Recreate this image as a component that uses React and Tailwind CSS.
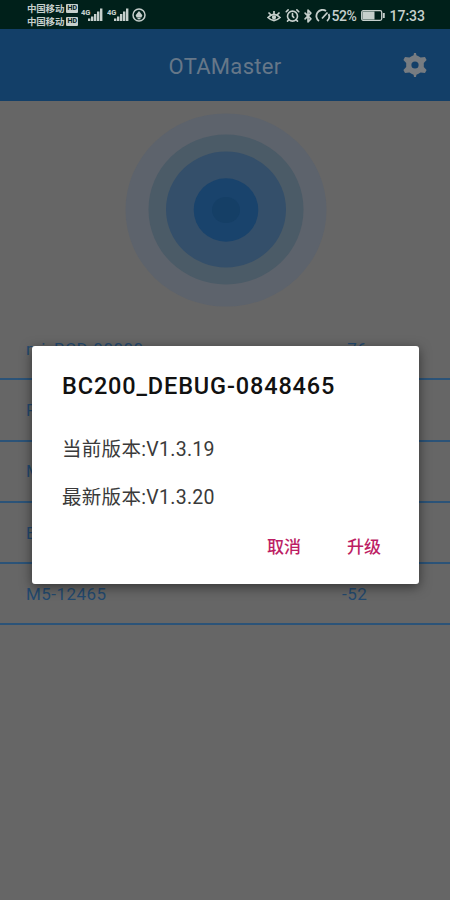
import { Bluetooth, AlarmClock } from "lucide-react";

const devices = [
    { name: "mi_BCD-00000", rssi: "-76" },
    { name: "P", rssi: "" },
    { name: "M", rssi: "" },
    { name: "B", rssi: "" },
    { name: "M5-12465", rssi: "-52" },
];

function Signal({ label }) {
    return (
        <svg viewBox="0 0 22 16" className="w-[22px] h-4 shrink-0" fill="#c6cfcc">
            <text x="0" y="8" fontSize="7.5" fontWeight="800" fontFamily="Roboto">{label}</text>
            <rect x="7" y="11.5" width="2.4" height="2.5" />
            <rect x="10" y="9.5" width="2.4" height="4.5" />
            <rect x="13" y="7" width="2.4" height="7" />
            <rect x="16" y="4.5" width="2.4" height="9.5" />
            <rect x="19" y="1.5" width="2.4" height="12.5" />
        </svg>
    );
}

function Carrier() {
    return (
        <div className="flex items-center gap-[2px] h-[13px]">
            <span className="text-[9.5px] leading-[13px] font-bold tracking-[-0.2px]">中国移动</span>
            <span className="w-3 h-[9px] rounded-[1px] bg-[#c6cfcc] text-[#00201a] text-[7px] leading-[9px] font-bold text-center">HD</span>
        </div>
    );
}

function StatusBar() {
    return (
        <div className="flex items-center h-[29px] pl-[27px] bg-[#00201a] text-[#c6cfcc]">
            <div className="w-[54px] shrink-0 pt-px">
                <Carrier />
                <Carrier />
            </div>
            <Signal label="4G" />
            <div className="w-[4px]" />
            <Signal label="4G" />
            <svg viewBox="0 0 14 14" className="ml-[3px] mt-px w-[14px] h-[14px]" fill="none" stroke="currentColor" strokeWidth="1.5">
                <circle cx="7" cy="7" r="6" />
                <path d="M3.6 7.2 7 3l3.4 4.2-1 2.3H4.6z" fill="currentColor" stroke="none" />
                <path d="M5.5 10.6h3" />
            </svg>
            <div className="flex items-center ml-auto pt-[2px] pr-[25px]">
                <svg viewBox="0 0 14 14" className="w-[14px] h-[14px]" fill="none" stroke="currentColor" strokeWidth="1.7">
                    <path d="M1 8.5q6-6 12 0q-6 6-12 0zM1.5 3.5l2 2M7 2v3M12.5 3.5l-2 2" />
                    <circle cx="7" cy="8.3" r="1.3" fill="currentColor" />
                </svg>
                <AlarmClock size={15} strokeWidth={2.6} className="ml-1" />
                <Bluetooth size={14} strokeWidth={2.8} className="ml-px" />
                <svg viewBox="0 0 16 14" className="w-4 h-[14px]" fill="none" stroke="currentColor" strokeWidth="1.8">
                    <path d="M4 12A5.7 5.7 0 0 1 11 2M13.6 5A5.7 5.7 0 0 1 12 12M7 9.5l5.5-6" />
                </svg>
                <span className="w-[27px] text-[14px] leading-none font-medium tracking-[-0.5px]">52%</span>
                <svg viewBox="0 0 24 11" className="ml-[3px] w-6 h-[11px]" fill="none" stroke="currentColor">
                    <rect x="0.7" y="0.7" width="20" height="9.6" rx="1.5" strokeWidth="1.3" />
                    <rect x="1.5" y="1.5" width="12" height="8" fill="currentColor" stroke="none" />
                    <path d="M22.8 3v5" strokeWidth="1.9" />
                </svg>
                <span className="ml-[4px] text-[14px] leading-none font-medium">17:33</span>
            </div>
        </div>
    );
}

function Header() {
    return (
        <header className="flex items-center justify-between h-[72px] bg-[#133f68]">
            <div className="w-[60px]" />
            <h1 className="pt-[3px] text-[22px] leading-none tracking-[0.3px] text-[#667788]">OTAMaster</h1>
            <div className="w-[60px] pl-[13px]">
                <svg viewBox="0 0 24 26" className="w-6 h-[26px]" fill="#777c81" fillRule="evenodd">
                    <path d="M8.5 4.2 10.6 3.2 11 1h2L13.4 3.2 15.5 4.2 17.6 5.6 22 4.9 23.6 8 20.8 11V15L23.6 18 22 21.1 17.6 20.4 15.5 21.8 13.4 22.8 13 25h-2L10.6 22.8 8.5 21.8 6.4 20.4 2 21.1 0.4 18 3.2 15V11L0.4 8 2 4.9 6.4 5.6zM12 9.4a3.6 3.6 0 1 0 0 7.2a3.6 3.6 0 1 0 0-7.2z" />
                </svg>
            </div>
        </header>
    );
}

function Radar() {
    return (
        <div className="flex justify-center pt-3 pl-px h-[218px]">
            <svg viewBox="0 0 202 194" className="w-[202px] h-[194px]">
                <ellipse cx="101" cy="97" rx="100.5" ry="96.5" fill="#5d636c" />
                <ellipse cx="101" cy="96.5" rx="77.5" ry="75" fill="#4b5b67" />
                <ellipse cx="101" cy="96.5" rx="60" ry="58" fill="#344f6a" />
                <ellipse cx="101" cy="97" rx="32.3" ry="31.7" fill="#19436c" />
                <ellipse cx="101" cy="97" rx="14" ry="13" fill="#153f66" />
            </svg>
        </div>
    );
}

function UpgradeDialog() {
    return (
        <div role="dialog" className="absolute left-8 top-[346px] flex flex-col w-[387px] h-[238px] px-[30px] rounded-[3px] bg-white shadow-[0_3px_12px_rgba(0,0,0,0.5)]">
            <h2 className="mt-[27px] text-[23.5px] leading-[26px] font-medium tracking-[0.85px] text-[#111]">BC200_DEBUG-0848465</h2>
            <p className="mt-[39px] text-[19.5px] leading-6 tracking-[0.3px] text-[#3a3a3a]">当前版本:V1.3.19</p>
            <p className="mt-6 text-[19.5px] leading-6 tracking-[0.3px] text-[#3a3a3a]">最新版本:V1.3.20</p>
            <div className="flex justify-end gap-[46px] mt-[25px] pr-2 text-[17px] leading-6 font-medium text-[#bd1e64]">
                <button>取消</button>
                <button>升级</button>
            </div>
        </div>
    );
}

export default function App() {
    return (
        <div className="relative w-[450px] h-[900px] overflow-hidden bg-[#666] font-[Roboto,'Noto_Sans_CJK_SC',sans-serif]">
            <StatusBar />
            <Header />
            <Radar />
            <ul>
                {devices.map((device) => (
                    <li key={device.name} className="flex items-center h-[61.25px] pt-[2px] pl-[26px] border-b-2 border-[#2b5378] text-[17px] tracking-[0.45px] text-[#23496e]">
                        <span className="w-[316px]">{device.name}</span>
                        <span>{device.rssi}</span>
                    </li>
                ))}
            </ul>
            <UpgradeDialog />
        </div>
    );
}
